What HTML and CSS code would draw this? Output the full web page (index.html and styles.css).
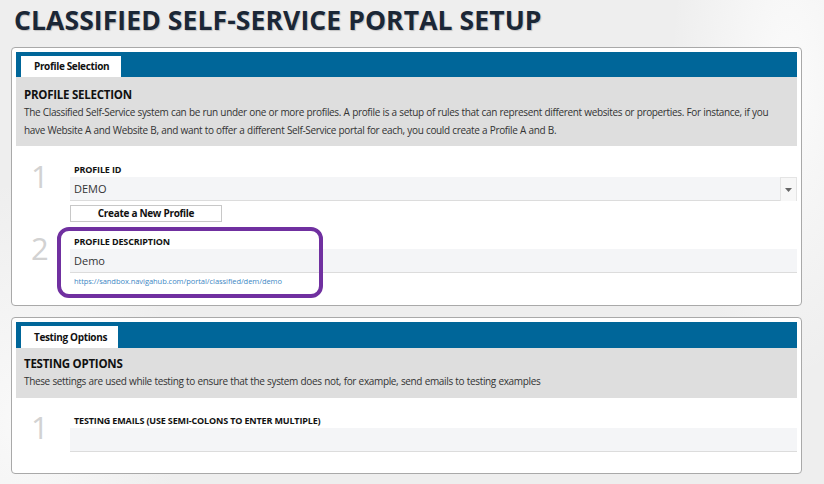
FILE: index.html
```html
<!DOCTYPE html>
<html>
<head>
<meta charset="utf-8">
<link rel="stylesheet" href="styles.css">
</head>
<body>
<h1 class="title">CLASSIFIED SELF-SERVICE PORTAL SETUP</h1>

<section class="panel">
  <div class="tabbar"><div class="tab">Profile Selection</div></div>
  <div class="intro">
    <h2 class="intro-title">PROFILE SELECTION</h2>
    <p class="intro-text">The Classified Self-Service system can be run under one or more profiles. A profile is a setup of rules that can represent different websites or properties. For instance, if you have Website A and Website B, and want to offer a different Self-Service portal for each, you could create a Profile A and B.</p>
  </div>
  <div class="fields">
    <div class="row">
      <div class="num">1</div>
      <div class="field">
        <div class="label">PROFILE ID</div>
        <div class="select"><span class="value">DEMO</span><span class="arrow"><svg width="7" height="4" viewBox="0 0 7 4"><path d="M0 0H7L3.5 4Z" fill="#666"/></svg></span></div>
        <button class="btn">Create a New Profile</button>
      </div>
    </div>
    <div class="row row2">
      <div class="num">2</div>
      <div class="field">
        <div class="label">PROFILE DESCRIPTION</div>
        <div class="input"><span class="value">Demo</span></div>
        <a class="link">https://sandbox.navigahub.com/portal/classified/dem/demo</a>
      </div>
      <div class="highlight"></div>
    </div>
  </div>
</section>

<section class="panel">
  <div class="tabbar tabbar-2"><div class="tab tab-2">Testing Options</div></div>
  <div class="intro intro-short">
    <h2 class="intro-title">TESTING OPTIONS</h2>
    <p class="intro-text">These settings are used while testing to ensure that the system does not, for example, send emails to testing examples</p>
  </div>
  <div class="fields fields-2">
    <div class="row">
      <div class="num">1</div>
      <div class="field">
        <div class="label">TESTING EMAILS (USE SEMI-COLONS TO ENTER MULTIPLE)</div>
        <div class="input"></div>
      </div>
    </div>
  </div>
</section>

<section class="panel panel-next"></section>
</body>
</html>
```

FILE: styles.css
```css
html, body {
  margin: 0;
  padding: 0;
}
body {
  width: 824px;
  height: 484px;
  overflow: hidden;
  padding: 0 22px 0 11px;
  box-sizing: border-box;
  font-family: "Open Sans", "Noto Sans", sans-serif;
  color: #333;
  background:
    radial-gradient(ellipse 120px 300px at 790px 80px, #fbfbfb, rgba(251,251,251,0)),
    radial-gradient(ellipse 160px 240px at 20px 420px, #f9f9f9, rgba(249,249,249,0)),
    #eeeeee;
}
.title {
  margin: 0;
  padding: 4px 0 0 3px;
  height: 47px;
  box-sizing: border-box;
  font-size: 26.5px;
  font-weight: 700;
  letter-spacing: 0.1px;
  color: #1b2736;
  text-shadow: 1px 1px 1px rgba(0,0,0,0.18);
  line-height: 32px;
}
.panel {
  background: #fff;
  border: 1px solid #a9a9a9;
  border-radius: 4px;
  padding: 4px;
  margin-bottom: 11px;
  box-sizing: border-box;
  width: 791px;
}
.tabbar {
  background: #006699;
  height: 25px;
  padding: 4px 0 0 5px;
  box-sizing: border-box;
  display: flex;
  align-items: flex-end;
}
.tabbar-2 {
  height: 26px;
}
.tab {
  background: #fff;
  height: 21px;
  width: 100px;
  box-sizing: border-box;
  padding-left: 13px;
  font-size: 10px;
  font-weight: 700;
  color: #111;
  line-height: 21px;
  letter-spacing: -0.35px;
}
.tab-2 {
  width: 97px;
  height: 22px;
  line-height: 22px;
}
.intro {
  background: #dedede;
  height: 69px;
  padding: 10px 8px 0 8px;
  box-sizing: border-box;
}
.intro-short {
  height: 50px;
  padding-top: 8px;
}
.intro-title {
  margin: 0;
  font-size: 11.5px;
  font-weight: 700;
  color: #111;
  line-height: 16px;
  letter-spacing: -0.25px;
}
.intro-text {
  margin: 0;
  font-size: 10px;
  line-height: 18px;
  color: #333;
  letter-spacing: -0.35px;
  word-spacing: 0.3px;
}
.fields {
  padding: 17px 0 15px 0;
}
.fields-2 {
  padding-top: 16px;
  padding-bottom: 17px;
}
.row {
  display: grid;
  grid-template-columns: 54px 1fr;
  position: relative;
}
.row2 {
  margin-top: 13px;
}
.num {
  font-size: 31px;
  font-weight: 400;
  color: #d2d2d2;
  line-height: 30px;
  padding: 0 0 0 15px;
  margin-top: -2px;
}
.field {
  display: flex;
  flex-direction: column;
  align-items: flex-start;
}
.label {
  font-size: 9px;
  font-weight: 700;
  color: #111;
  line-height: 13px;
  padding-left: 4px;
  height: 14px;
  letter-spacing: -0.15px;
}
.select, .input {
  align-self: stretch;
  height: 24px;
  background: #f4f5f7;
  border-bottom: 1px solid #dcdcdc;
  box-sizing: border-box;
  display: flex;
  align-items: center;
  font-size: 11px;
  color: #333;
}
.value {
  padding-left: 4px;
  flex: 1;
}
.arrow {
  width: 17px;
  height: 24px;
  box-sizing: border-box;
  border-left: 1px solid #e4e4e4;
  border-top: 1px solid #e4e4e4;
  border-right: 1px solid #e4e4e4;
  background: #f7f7f7;
  display: flex;
  align-items: center;
  justify-content: center;
  margin-top: 1px;
}
.btn {
  margin-top: 4px;
  width: 152px;
  height: 17px;
  padding: 0;
  background: #fff;
  border: 1px solid #c8c8c8;
  font-family: "Open Sans", "Noto Sans", sans-serif;
  font-size: 10px;
  font-weight: 700;
  color: #111;
  line-height: 15px;
  letter-spacing: -0.3px;
}
.link {
  font-size: 7.5px;
  color: #3d87c4;
  padding: 3px 0 0 4px;
  line-height: 10px;
  letter-spacing: -0.05px;
}
.highlight {
  position: absolute;
  left: 41px;
  top: -8px;
  width: 266px;
  height: 71px;
  border: 4px solid #7030a0;
  border-radius: 12px;
  box-sizing: border-box;
  pointer-events: none;
}
.panel-next {
  height: 8px;
  margin-bottom: 0;
}
```
